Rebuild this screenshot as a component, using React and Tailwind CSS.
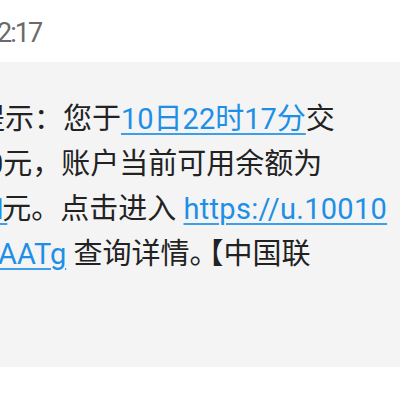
export default function App(){

const link = "text-[#1e8fe6] underline decoration-[#3d9fea] decoration-[1.5px] underline-offset-[4px]";

return(

<div className="w-[400px] h-[400px] bg-white overflow-hidden [font-family:Roboto,'Noto_Sans_CJK_SC',sans-serif] [text-spacing-trim:space-all]">

<div className="h-[62px] pt-[15px] text-[27px] leading-[36px] tracking-[-2px] text-[#6a6a6a] ml-[-3px]">
2:17
</div>

<div className="h-[305px] bg-[#f4f4f4] pt-[35px] text-[29px] leading-[45px] text-[#222222] whitespace-nowrap">

<div className="ml-[-24px]">
提示：您于<span className={link}>10日22时17分</span>交
</div>

<div className="ml-[-13px]">
0元，账户当前可用余额为
</div>

<div className="ml-[-9px]">
<span className={link + " mr-[-5px]"}>1</span>元。点击进入 <span className={link + " tracking-[0.3px]"}>https://u.10010</span>
</div>

<div className="ml-[-2px]">
<span className={link}>AATg</span> 查询详情<span className="mr-[-24px]">。</span>【中国联
</div>

</div>

</div>

)

}
